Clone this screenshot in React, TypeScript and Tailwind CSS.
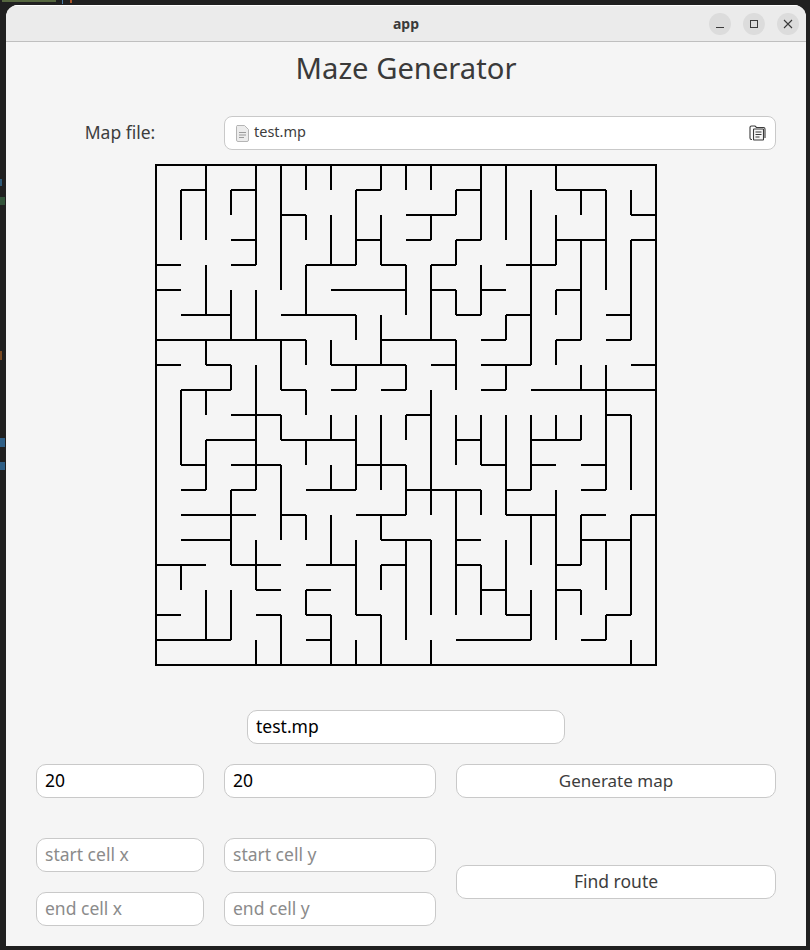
import React from 'react';

// maze walls in cell units: [line, from, to]
const hWalls: number[][] = [
  [1,1,2],[1,3,4],[1,8,9],[1,12,13],[1,16,18],
  [2,5,6],[2,10,12],[2,19,20],
  [3,3,4],[3,8,9],[3,10,11],[3,12,13],[3,16,18],[3,19,20],
  [4,0,1],[4,3,4],[4,6,8],[4,9,10],[4,11,12],[4,14,16],
  [5,0,1],[5,7,10],[5,11,12],[5,13,14],[5,16,17],
  [6,1,3],[6,5,8],[6,12,13],[6,14,15],[6,18,19],
  [7,0,6],[7,9,12],[7,13,14],[7,16,17],[7,18,19],
  [8,0,1],[8,2,3],[8,7,10],[8,11,12],[8,13,15],[8,19,20],
  [9,1,3],[9,5,6],[9,7,8],[9,9,10],[9,13,14],[9,15,20],
  [10,3,5],[10,10,11],[10,18,19],
  [11,2,4],[11,5,8],[11,12,13],[11,15,17],
  [12,1,2],[12,3,5],[12,8,10],[12,13,14],[12,15,16],[12,17,18],
  [13,1,2],[13,3,4],[13,6,8],[13,10,13],[13,14,15],[13,17,18],
  [14,1,4],[14,5,6],[14,8,10],[14,14,16],[14,17,18],[14,19,20],
  [15,1,3],[15,9,11],[15,12,13],[15,17,19],
  [16,0,2],[16,3,5],[16,6,8],[16,9,10],[16,12,13],[16,16,17],
  [17,4,5],[17,6,7],[17,13,14],[17,16,17],
  [18,0,1],[18,4,5],[18,6,7],[18,8,9],[18,14,15],[18,18,19],
  [19,0,3],[19,6,7],[19,12,15],[19,17,18],
];

const vWalls: number[][] = [
  [1,1,3],[1,9,12],[1,16,17],
  [2,0,3],[2,4,6],[2,7,8],[2,9,10],[2,11,13],[2,17,19],
  [3,1,2],[3,5,7],[3,8,9],[3,13,16],[3,17,19],
  [4,0,4],[4,5,7],[4,8,13],[4,15,17],[4,19,20],
  [5,0,5],[5,7,9],[5,10,11],[5,12,15],[5,18,20],
  [6,0,1],[6,2,3],[6,4,6],[6,7,8],[6,9,10],[6,11,12],[6,14,15],[6,17,18],
  [7,0,1],[7,2,4],[7,7,8],[7,10,11],[7,12,13],[7,14,16],[7,18,20],
  [8,1,4],[8,6,7],[8,8,9],[8,10,13],[8,15,18],[8,19,20],
  [9,0,1],[9,2,4],[9,6,8],[9,10,13],[9,14,15],[9,16,17],[9,18,20],
  [10,0,1],[10,4,6],[10,8,9],[10,10,11],[10,12,14],[10,15,19],
  [11,0,1],[11,2,3],[11,4,7],[11,9,14],[11,15,18],[11,19,20],
  [12,1,2],[12,3,4],[12,5,6],[12,7,9],[12,10,12],[12,13,18],
  [13,0,3],[13,4,6],[13,10,12],[13,13,14],[13,16,18],
  [14,0,3],[14,6,7],[14,8,9],[14,10,14],[14,15,18],
  [15,1,8],[15,10,13],[15,14,16],[15,17,19],
  [16,0,1],[16,2,4],[16,5,6],[16,7,8],[16,10,11],[16,13,19],
  [17,1,2],[17,3,7],[17,8,9],[17,10,11],[17,14,16],[17,17,18],
  [18,1,5],[18,8,13],[18,15,17],[18,18,19],
  [19,1,2],[19,3,7],[19,10,13],[19,14,18],[19,19,20],
];

const CELL = 25;
const OFF = 1;
const wallPath =
  hWalls.map(([y, a, b]) => `M${OFF + a * CELL} ${OFF + y * CELL}H${OFF + b * CELL}`).join('') +
  vWalls.map(([x, a, b]) => `M${OFF + x * CELL} ${OFF + a * CELL}V${OFF + b * CELL}`).join('');

const Maze = () => (
  <svg width="502" height="502" viewBox="0 0 502 502" className="block mx-auto mt-[14px]" shapeRendering="crispEdges">
    <rect x="1" y="1" width="500" height="500" fill="none" stroke="#000" strokeWidth="2" />
    <path d={wallPath} fill="none" stroke="#000" strokeWidth="2" />
  </svg>
);

const fieldClass =
  'h-[34px] w-full rounded-[10px] border border-[#c9c9c9] bg-white px-2 pb-[2px] text-[17.5px] text-black outline-none placeholder:text-[#8b8b8b]';

const buttonClass = 'h-[34px] w-full rounded-[10px] border border-[#c9c9c9] bg-white pb-[1px] text-[17px] text-[#3d3d3d]';

const WinButton = ({ children }: { children: React.ReactNode }) => (
  <div className="w-[22px] h-[22px] rounded-full bg-[#dcdcdc] flex items-center justify-center text-[#3a3a3a]">
    {children}
  </div>
);

export default function App() {
  return (
    <div className="relative w-[810px] h-[950px] overflow-hidden bg-[#202020] pt-[5px] pl-[6px]" style={{ fontFamily: '"Noto Sans", sans-serif' }}>
      {/* bits of the editor behind the window */}
      <div className="absolute left-[2px] top-0 w-[54px] h-[2px] bg-[#55663f]" />
      <div className="absolute left-[62px] top-0 w-px h-[4px] bg-[#4a7fa8]" />
      <div className="absolute left-[70px] top-0 w-[2px] h-[3px] bg-[#a8542a]" />
      <div className="absolute left-0 top-[179px] w-[2px] h-[7px] bg-[#2f5a78]" />
      <div className="absolute left-0 top-[197px] w-[5px] h-[8px] bg-[#33543a]" />
      <div className="absolute left-0 top-[351px] w-[2px] h-[9px] bg-[#7a4a22]" />
      <div className="absolute left-0 top-[438px] w-[5px] h-[9px] bg-[#2f5f86]" />
      <div className="absolute left-0 top-[462px] w-[5px] h-[8px] bg-[#2f5f86]" />

      <div className="w-[800px] h-[941px] rounded-t-[12px] bg-[#f5f5f5] overflow-hidden flex flex-col">
        <header className="relative h-[37px] shrink-0 bg-[#ebebeb] border-t border-t-white border-b border-b-[#bfbfbf] flex items-center justify-end gap-3 pr-[7px]">
          <span className="absolute inset-x-0 top-[7px] text-center text-[14px] font-bold text-[#3a3a3a]">app</span>
          <WinButton>
            <svg width="10" height="10" viewBox="0 0 10 10" shapeRendering="crispEdges"><path d="M1 8.5H9" stroke="currentColor" strokeWidth="1" /></svg>
          </WinButton>
          <WinButton>
            <svg width="10" height="10" viewBox="0 0 10 10" shapeRendering="crispEdges"><rect x="1.5" y="1.5" width="7" height="7" fill="none" stroke="currentColor" strokeWidth="1" /></svg>
          </WinButton>
          <WinButton>
            <svg width="10" height="10" viewBox="0 0 10 10"><path d="M1 1L9 9M9 1L1 9" stroke="currentColor" strokeWidth="1.1" /></svg>
          </WinButton>
        </header>

        <h1 className="h-[54px] flex items-center justify-center text-[29.2px] font-normal text-[#3a3a3a]">Maze Generator</h1>

        <div className="mt-5 px-[30px] grid grid-cols-[168px_212px_320px] gap-x-5">
          <div className="h-[34px] pb-[2px] flex items-center justify-center text-[17.5px] text-[#3d3d3d]">Map file:</div>
          <div className="col-span-2 h-[34px] rounded-[8px] border border-[#c9c9c9] bg-white flex items-center pl-[10px] pr-[9px] text-[14.5px] text-[#3d3d3d]">
            <svg width="15" height="17" viewBox="0 0 15 17" className="mr-[4px]">
              <path d="M2 .5H9.5L13.5 4.5V15A1.5 1.5 0 0 1 12 16.5H3A1.5 1.5 0 0 1 1.5 15V1.5Z" fill="#ececec" stroke="#b5b5b5" />
              <path d="M4 7.5H11M4 10H11M4 12.5H9" stroke="#9a9a9a" />
            </svg>
            <span className="flex-1 pb-[2px]">test.mp</span>
            <svg width="17" height="16" viewBox="0 0 17 16" fill="none" stroke="#3a3a3a" strokeWidth="1.1">
              <path d="M3 14.5H2.5A1.5 1.5 0 0 1 1 13V2.5A1.5 1.5 0 0 1 2.5 1H6L7.5 2.5H14.5A1.5 1.5 0 0 1 16 4V13" />
              <rect x="4.5" y="4" width="10" height="11" rx=".5" fill="#f5f5f5" />
              <path d="M6.5 7H12.5M6.5 9.5H12.5M6.5 12H10.5" />
            </svg>
          </div>
        </div>

        <Maze />

        <input readOnly value="test.mp" className={`${fieldClass} block !w-[318px] mx-auto mt-[44px]`} />

        <div className="mt-5 px-[30px] grid grid-cols-[168px_212px_320px] grid-rows-[54px_34px_34px] gap-x-5 gap-y-5">
          <input readOnly value="20" className={fieldClass} />
          <input readOnly value="20" className={fieldClass} />
          <button className={buttonClass}>Generate map</button>

          <input readOnly placeholder="start cell x" className={fieldClass} />
          <input readOnly placeholder="start cell y" className={fieldClass} />
          <div className="row-span-2 flex items-center">
            <button className={`${buttonClass} !text-[17.5px]`}>Find route</button>
          </div>

          <input readOnly placeholder="end cell x" className={fieldClass} />
          <input readOnly placeholder="end cell y" className={fieldClass} />
        </div>
      </div>
    </div>
  );
}
